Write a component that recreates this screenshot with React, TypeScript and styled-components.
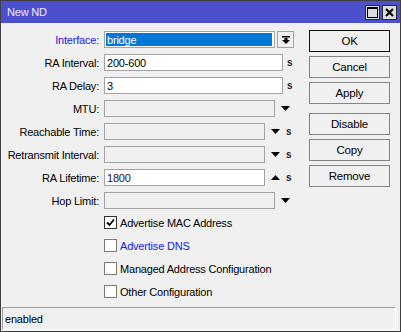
import { createGlobalStyle } from 'styled-components'
import styled from 'styled-components'

const GlobalStyle = createGlobalStyle`
  html, body {
    margin: 0;
    padding: 0;
    background: #f0f0f0;
  }
  * {
    box-sizing: border-box;
  }
`

const Window = styled.div`
  display: flex;
  flex-direction: column;
  width: 401px;
  height: 332px;
  border: 1px solid #3f3f3f;
  background: #f0f0f0;
  font-family: 'Liberation Sans', Arial, sans-serif;
  font-size: 11px;
  letter-spacing: -0.2px;
  color: #000;
`

const TitleBar = styled.div`
  display: flex;
  align-items: center;
  height: 22px;
  padding: 0 3px 0 6px;
  background: #4c50cc;
  color: #ececfa;
`

const TitleText = styled.div`
  flex: 1;
  font-size: 11px;
`

const TitleButtons = styled.div`
  display: flex;
  gap: 2px;
`

const TitleButton = styled.div`
  display: flex;
  align-items: center;
  justify-content: center;
  width: 15px;
  height: 15px;
  background: #dcdcdc;
  border: 1px solid #2a2a2a;
`

const Body = styled.div`
  display: flex;
  flex: 1;
  padding-top: 7px;
`

const Form = styled.div`
  display: flex;
  flex-direction: column;
  gap: 6px;
  width: 307px;
  margin-top: 1px;
`

const Row = styled.div`
  display: flex;
  align-items: center;
  height: 17px;
`

const Label = styled.div<{ $blue?: boolean }>`
  width: 99px;
  padding-right: 1px;
  text-align: right;
  white-space: nowrap;
  color: ${({ $blue }) => ($blue ? '#1a1ae6' : '#000')};
`

const Field = styled.div<{ $width: number; $disabled?: boolean; $tint?: string }>`
  display: flex;
  align-items: center;
  width: ${({ $width }) => $width}px;
  height: 17px;
  margin-left: 4px;
  padding: 0 2px;
  border: 1px solid #a3a3a3;
  background: ${({ $disabled }) => ($disabled ? '#f0f0f0' : '#fff')};
  color: ${({ $tint }) => $tint || '#000'};
  white-space: nowrap;
  overflow: hidden;
`

const SelectedText = styled.span`
  display: flex;
  align-items: center;
  height: 13px;
  margin-left: -1px;
  padding: 0 1px;
  width: calc(100% + 2px);
  background: #0078d7;
  color: #fff;
`

const DropButton = styled.div`
  display: flex;
  align-items: center;
  justify-content: center;
  width: 17px;
  height: 17px;
  margin-left: 2px;
  border: 1px solid #a3a3a3;
  background: #f0f0f0;
`

const Arrow = styled.div<{ $gap: number }>`
  display: flex;
  align-items: center;
  margin-left: ${({ $gap }) => $gap}px;
`

const Unit = styled.div<{ $gap: number }>`
  margin-left: ${({ $gap }) => $gap}px;
  font-size: 10px;
  font-weight: bold;
  color: #2b1b2b;
`

const Checks = styled.div`
  display: flex;
  flex-direction: column;
  gap: 6px;
  margin-top: -1px;
  padding-left: 103px;
`

const CheckRow = styled.div<{ $blue?: boolean }>`
  display: flex;
  align-items: center;
  gap: 3px;
  height: 17px;
  color: ${({ $blue }) => ($blue ? '#1a1ae6' : '#000')};
`

const Box = styled.div<{ $checked?: boolean }>`
  display: flex;
  align-items: center;
  justify-content: center;
  width: 13px;
  height: 13px;
  border: 1px solid ${({ $checked }) => ($checked ? '#333' : '#7a7a7a')};
  background: #fff;
`

const Buttons = styled.div`
  display: flex;
  flex-direction: column;
  gap: 4px;
  width: 81px;
  margin-left: 1px;
`

const Button = styled.div<{ $default?: boolean; $spaced?: boolean }>`
  display: flex;
  align-items: center;
  justify-content: center;
  height: 22px;
  margin-top: ${({ $spaced }) => ($spaced ? '5px' : '0')};
  border: 1px solid ${({ $default }) => ($default ? '#111' : '#858585')};
  background: #f0f0f0;
  font-size: 11.5px;
`

const StatusBar = styled.div`
  display: flex;
  align-items: center;
  height: 23px;
  margin: 0 4px 1px 1px;
  padding-left: 2px;
  border: 1px solid #a0a0a0;
  border-right-color: #fff;
  border-bottom-color: #fff;
`

const Down = () => (
  <svg width="9" height="5" viewBox="0 0 9 5">
    <path d="M0 0 H9 L4.5 5 Z" fill="#000" />
  </svg>
)

const Up = () => (
  <svg width="9" height="5" viewBox="0 0 9 5">
    <path d="M0 5 H9 L4.5 0 Z" fill="#000" />
  </svg>
)

const Check = () => (
  <svg width="9" height="9" viewBox="0 0 9 9">
    <path d="M1 4.5 L3.5 7 L8 1.5" stroke="#000" strokeWidth="1.8" fill="none" />
  </svg>
)

export default function App() {
  return (
    <>
      <GlobalStyle />
      <Window>
        <TitleBar>
          <TitleText>New ND</TitleText>
          <TitleButtons>
            <TitleButton>
              <svg width="11" height="11" viewBox="0 0 11 11">
                <rect x="0.5" y="0.5" width="10" height="10" fill="none" stroke="#000" />
                <rect x="0" y="0" width="11" height="2" fill="#000" />
              </svg>
            </TitleButton>
            <TitleButton>
              <svg width="9" height="9" viewBox="0 0 9 9">
                <path d="M1 1 L8 8 M8 1 L1 8" stroke="#000" strokeWidth="2" />
              </svg>
            </TitleButton>
          </TitleButtons>
        </TitleBar>

        <Body>
          <Form>
            <Row>
              <Label $blue>Interface:</Label>
              <Field $width={171}>
                <SelectedText>bridge</SelectedText>
              </Field>
              <DropButton>
                <svg width="8" height="8" viewBox="0 0 8 8">
                  <rect x="0" y="0" width="8" height="1.5" fill="#000" />
                  <path d="M2.5 2 H5.5 V4 H8 L4 8 L0 4 H2.5 Z" fill="#000" />
                </svg>
              </DropButton>
            </Row>
            <Row>
              <Label>RA Interval:</Label>
              <Field $width={179}>200-600</Field>
              <Unit $gap={4}>s</Unit>
            </Row>
            <Row>
              <Label>RA Delay:</Label>
              <Field $width={179}>3</Field>
              <Unit $gap={4}>s</Unit>
            </Row>
            <Row>
              <Label>MTU:</Label>
              <Field $width={171} $disabled />
              <Arrow $gap={6}>
                <Down />
              </Arrow>
            </Row>
            <Row>
              <Label>Reachable Time:</Label>
              <Field $width={161} $disabled />
              <Arrow $gap={6}>
                <Down />
              </Arrow>
              <Unit $gap={6}>s</Unit>
            </Row>
            <Row>
              <Label>Retransmit Interval:</Label>
              <Field $width={161} $disabled />
              <Arrow $gap={6}>
                <Down />
              </Arrow>
              <Unit $gap={6}>s</Unit>
            </Row>
            <Row>
              <Label>RA Lifetime:</Label>
              <Field $width={161} $tint="#2a0f35">1800</Field>
              <Arrow $gap={6}>
                <Up />
              </Arrow>
              <Unit $gap={6}>s</Unit>
            </Row>
            <Row>
              <Label>Hop Limit:</Label>
              <Field $width={171} $disabled />
              <Arrow $gap={6}>
                <Down />
              </Arrow>
            </Row>

            <Checks>
              <CheckRow>
                <Box $checked>
                  <Check />
                </Box>
                Advertise MAC Address
              </CheckRow>
              <CheckRow $blue>
                <Box />
                Advertise DNS
              </CheckRow>
              <CheckRow>
                <Box />
                Managed Address Configuration
              </CheckRow>
              <CheckRow>
                <Box />
                Other Configuration
              </CheckRow>
            </Checks>
          </Form>

          <Buttons>
            <Button $default>OK</Button>
            <Button>Cancel</Button>
            <Button>Apply</Button>
            <Button $spaced>Disable</Button>
            <Button>Copy</Button>
            <Button>Remove</Button>
          </Buttons>
        </Body>

        <StatusBar>enabled</StatusBar>
      </Window>
    </>
  )
}
